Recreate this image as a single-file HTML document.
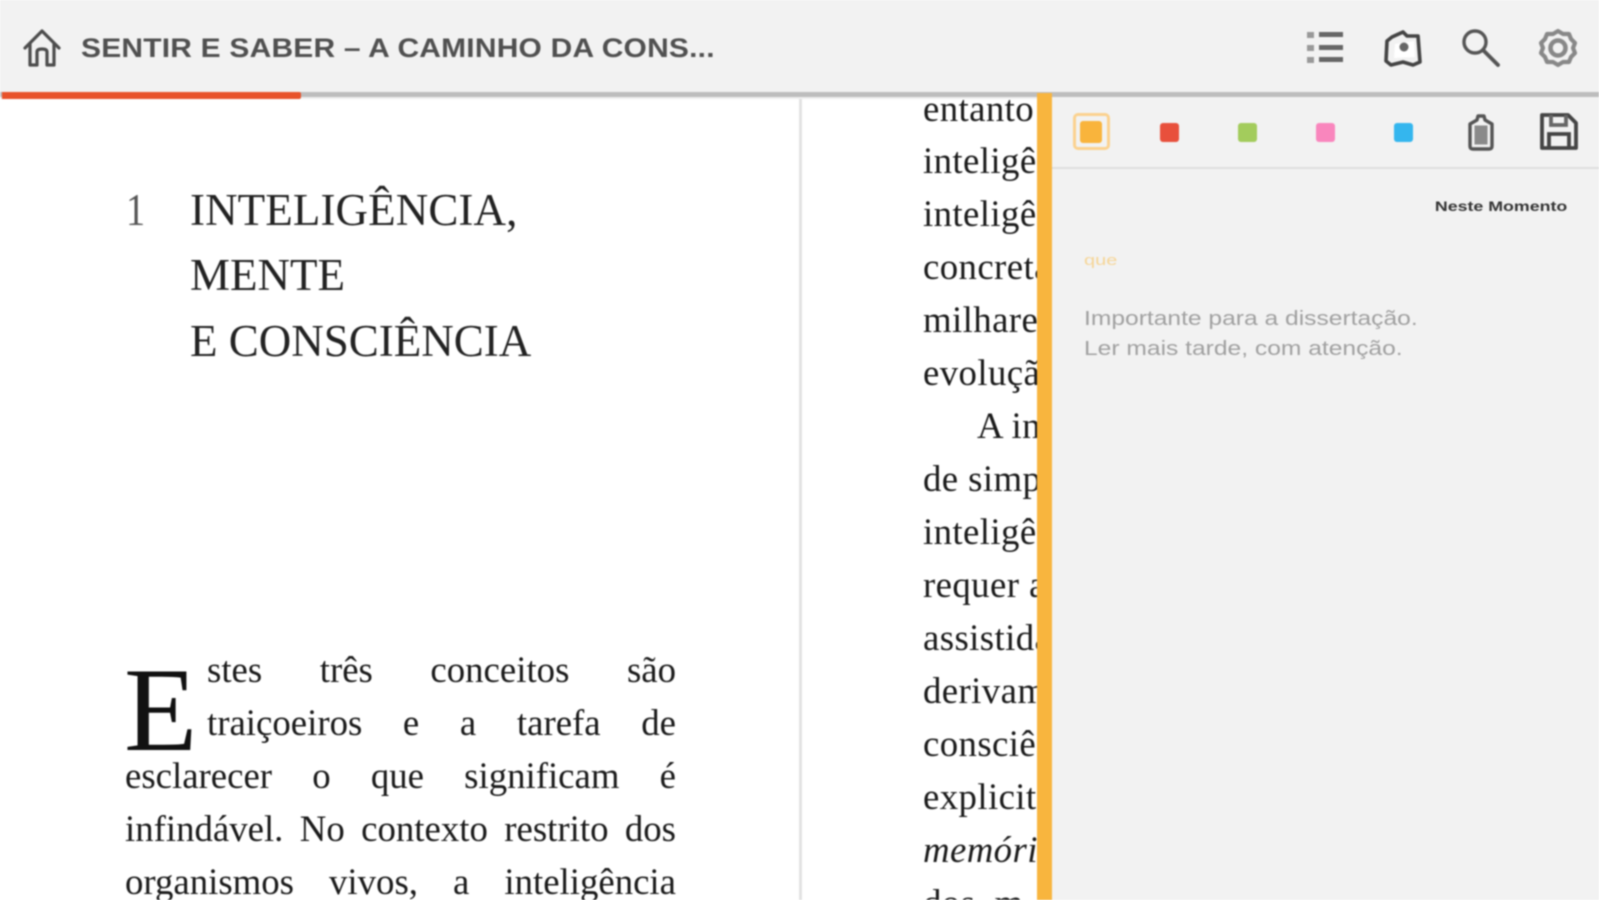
<!DOCTYPE html>
<html lang="pt">
<head>
<meta charset="utf-8">
<title>Sentir e Saber</title>
<style>
html,body{margin:0;padding:0;background:#fff;}
#wrap{position:relative;width:1599px;height:900px;overflow:hidden;background:#fff;filter:blur(.8px);}
.l{position:absolute;font-family:"Liberation Serif",serif;font-size:36.8px;line-height:53px;height:53px;color:#1a1a1a;white-space:nowrap;}
.r{left:923px;letter-spacing:.4px;}
.j{left:125px;width:551px;text-align:justify;text-align-last:justify;white-space:normal;}
.j2{left:207px;width:469px;text-align:justify;text-align-last:justify;white-space:normal;}
.h{position:absolute;font-family:"Liberation Serif",serif;font-size:45px;line-height:50px;color:#222;white-space:nowrap;}
.s{position:absolute;top:123px;width:19px;height:19px;border-radius:3px;}
svg{position:absolute;overflow:visible;}
</style>
</head>
<body>
<div id="wrap">

<div class="h" style="left:126px;top:185px;color:#555;transform:scaleX(.85);transform-origin:left;">1</div>
<div class="h" style="left:190px;top:185px;letter-spacing:.1px;">INTELIGÊNCIA,</div>
<div class="h" style="left:190px;top:250px;">MENTE</div>
<div class="h" style="left:190px;top:316px;">E CONSCIÊNCIA</div>

<div style="position:absolute;left:124px;top:645px;font-family:'Liberation Serif',serif;font-size:120px;line-height:130px;color:#111;">E</div>
<div class="l j2" style="top:643px;">stes três conceitos são</div>
<div class="l j2" style="top:696px;">traiçoeiros e a tarefa de</div>
<div class="l j" style="top:749px;">esclarecer o que significam é</div>
<div class="l j" style="top:802px;">infindável. No contexto restrito dos</div>
<div class="l j" style="top:855px;">organismos vivos, a inteligência</div>

<div style="position:absolute;left:799px;top:95px;width:3px;height:805px;background:#e2e2e2;"></div>

<div class="l r" style="top:82px;">entanto a</div>
<div class="l r" style="top:134px;">inteligência</div>
<div class="l r" style="top:187px;">inteligência</div>
<div class="l r" style="top:240px;">concreta</div>
<div class="l r" style="top:293px;">milhares</div>
<div class="l r" style="top:346px;">evolução</div>
<div class="l r" style="left:977px;top:399px;">A inteligência</div>
<div class="l r" style="top:452px;">de simples</div>
<div class="l r" style="top:505px;">inteligência</div>
<div class="l r" style="top:558px;">requer a</div>
<div class="l r" style="top:611px;">assistida</div>
<div class="l r" style="top:664px;">derivam</div>
<div class="l r" style="top:717px;">consciência</div>
<div class="l r" style="top:770px;">explicita</div>
<div class="l r" style="top:823px;font-style:italic;">memória</div>
<div class="l r" style="top:876px;">dos &nbsp;m</div>

<div style="position:absolute;left:1052px;top:92px;width:547px;height:808px;background:#f2f2f2;"></div>
<div style="position:absolute;left:1052px;top:167px;width:547px;height:2px;background:#dedede;"></div>

<div style="position:absolute;left:1073px;top:113px;width:31px;height:31px;border:3px solid #fbd28f;border-radius:5px;"></div>
<div class="s" style="left:1080px;top:121px;background:#f9b43c;width:22px;height:22px;"></div>
<div class="s" style="left:1160px;background:#e8503c;"></div>
<div class="s" style="left:1238px;background:#a3cc5c;"></div>
<div class="s" style="left:1316px;background:#f986bd;"></div>
<div class="s" style="left:1394px;background:#34b6ee;"></div>

<svg style="left:1468px;top:112px;" width="26" height="40" viewBox="0 0 26 40" fill="none" stroke="#555" stroke-width="3.4">
  <path d="M2 12 L9 8 L10 4 H16 L17 8 L24 12 V34 Q24 37 21 37 H5 Q2 37 2 34 Z" stroke-linejoin="round"/>
  <rect x="7" y="14" width="12" height="18" fill="#8a8a8a" stroke="#8a8a8a" stroke-width="1"/>
</svg>
<svg style="left:1539px;top:112px;" width="40" height="40" viewBox="0 0 40 40" fill="none" stroke="#444" stroke-width="3.8">
  <path d="M3 3 H29 L37 11 V36 H3 Z" stroke-linejoin="round"/>
  <path d="M12 3 V13 H27 V3" stroke="#666"/>
  <path d="M10 36 V22 H30 V36"/>
</svg>

<div style="position:absolute;right:32px;top:198px;font:bold 14px 'Liberation Sans',sans-serif;color:#333;white-space:nowrap;transform:scaleX(1.27);transform-origin:right;">Neste Momento</div>
<div style="position:absolute;left:1084px;top:252px;font:15px 'Liberation Sans',sans-serif;color:#f6d596;transform:scaleX(1.33);transform-origin:left;">que</div>
<div style="position:absolute;left:1084px;top:304px;font:20.5px/30px 'Liberation Sans',sans-serif;color:#a0a0a0;white-space:nowrap;transform:scaleX(1.2);transform-origin:left;">Importante para a dissertação.<br>Ler mais tarde, com atenção.</div>

<div style="position:absolute;left:0;top:0;width:1599px;height:92px;background:#f2f2f2;"></div>
<div style="position:absolute;left:0;top:92px;width:1599px;height:5px;background:#bdbdbd;"></div>
<div style="position:absolute;left:0;top:97px;width:1040px;height:2px;background:#efefef;"></div>
<div style="position:absolute;left:2px;top:92px;width:299px;height:7px;background:#e8522a;border-radius:0 2px 2px 0;"></div>
<div style="position:absolute;left:1037px;top:93px;width:15px;height:807px;background:#f8b53e;"></div>

<svg style="left:23px;top:28px;" width="38" height="40" viewBox="0 0 38 40" fill="none" stroke="#4d4d4d" stroke-width="3.2" stroke-linejoin="round" stroke-linecap="round">
  <path d="M2 20 L19 3 L36 20"/>
  <path d="M7 16 V37 H14 V24 Q14 21 19 21 Q24 21 24 24 V37 H31 V16"/>
</svg>

<div style="position:absolute;left:81px;top:30px;font:bold 27px/36px 'Liberation Sans',sans-serif;color:#505050;white-space:nowrap;letter-spacing:.2px;transform:scaleX(1.109);transform-origin:left;">SENTIR E SABER – A CAMINHO DA CONS...</div>

<svg style="left:1306px;top:30px;" width="38" height="36" viewBox="0 0 38 36" fill="#666">
  <rect x="1" y="2" width="7" height="6" fill="#999"/>
  <rect x="1" y="15" width="7" height="6" fill="#999"/>
  <rect x="1" y="27" width="7" height="6" fill="#999"/>
  <rect x="13" y="2" width="24" height="5"/>
  <rect x="13" y="15" width="24" height="5"/>
  <rect x="13" y="27" width="24" height="5"/>
</svg>
<svg style="left:1383px;top:29px;" width="40" height="40" viewBox="0 0 40 40" fill="none" stroke="#444" stroke-width="3.6" stroke-linejoin="round">
  <path d="M4 12 L9 8 L20 3 L24 7 L35 7 L37 33 L30 36 L20 33 L8 36 L3 32 Z"/>
  <path d="M12 15 L31 12 L32 28 L11 29 Z" fill="#fff" stroke="none"/>
  <circle cx="21" cy="18" r="4.5" fill="#666" stroke="none"/>
</svg>
<svg style="left:1460px;top:28px;" width="42" height="42" viewBox="0 0 42 42" fill="none" stroke="#555" stroke-linecap="round">
  <circle cx="15" cy="14" r="11" stroke-width="3.4"/>
  <path d="M23 22 L38 37" stroke-width="3.8"/>
</svg>
<svg style="left:1538px;top:28px;" width="40" height="40" viewBox="0 0 40 40" fill="none" stroke="#888" stroke-width="4.2">
  <path d="M20 3 L25 6 L31 6 L33 11 L37 15 L35 20 L37 25 L33 29 L31 34 L25 34 L20 37 L15 34 L9 34 L7 29 L3 25 L5 20 L3 15 L7 11 L9 6 L15 6 Z" stroke-linejoin="round"/>
  <circle cx="20" cy="20" r="7.5" stroke-width="4.5" stroke="#888"/>
</svg>

</div>
</body>
</html>
